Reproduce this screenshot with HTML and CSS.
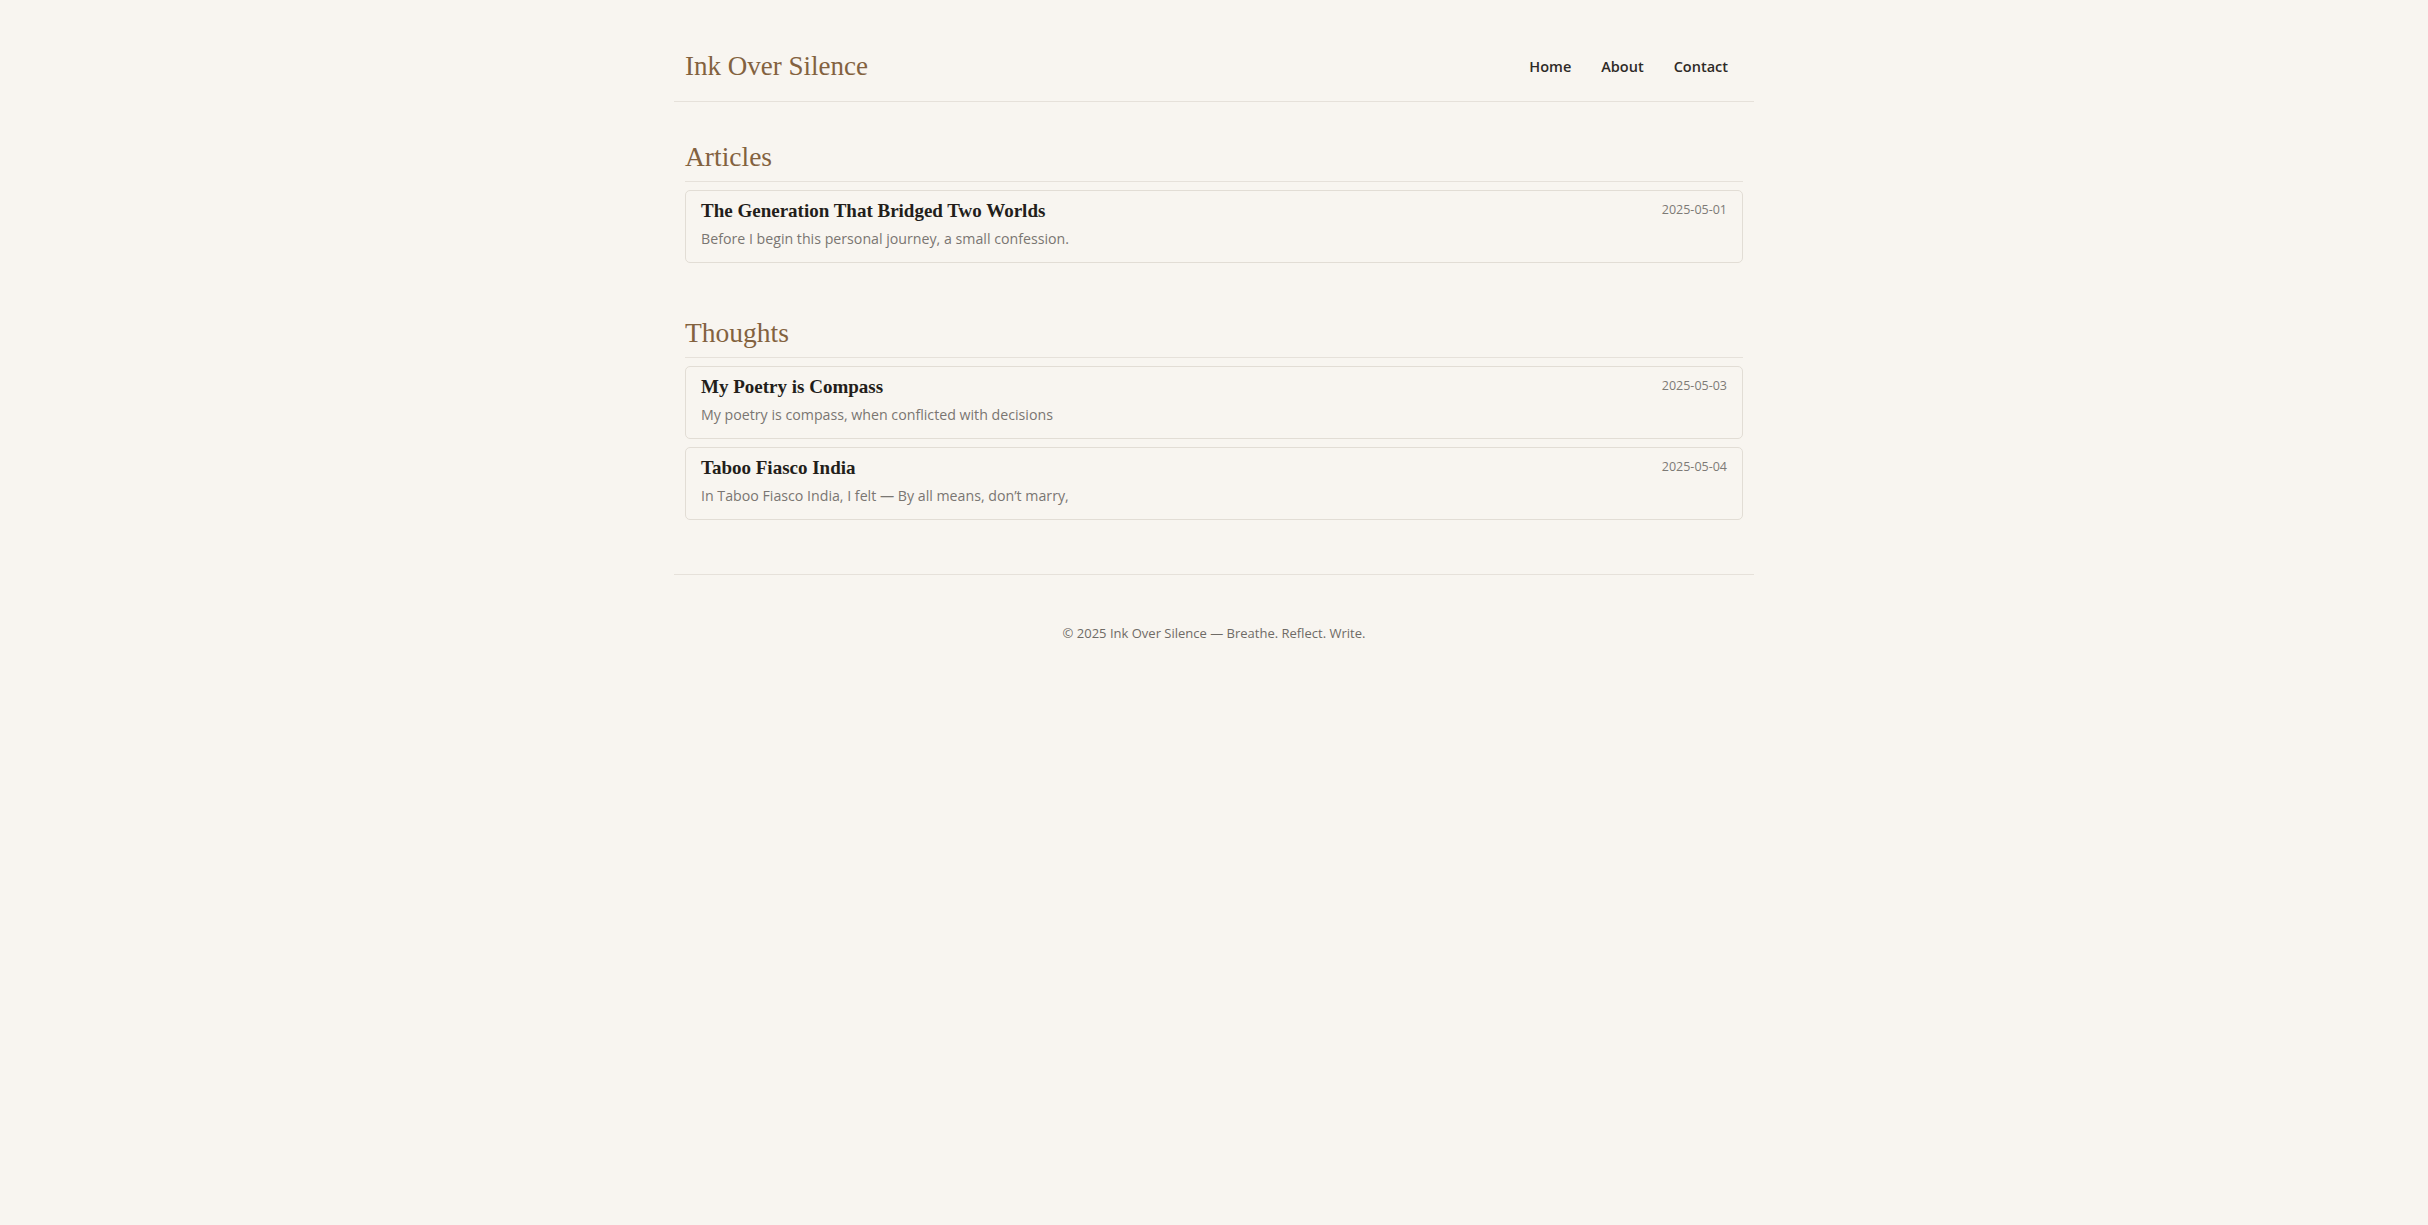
FILE: index.html
```html
<!DOCTYPE html>
<html lang="en">
<head>
<meta charset="utf-8">
<title>Ink Over Silence</title>
<link rel="stylesheet" href="styles.css">
</head>
<body>
<div class="page">
  <header class="site-header">
    <a class="site-title" href="#">Ink Over Silence</a>
    <nav class="site-nav">
      <a href="#">Home</a>
      <a href="#">About</a>
      <a href="#">Contact</a>
    </nav>
  </header>

  <main class="content">
    <section class="section">
      <h2 class="section-title">Articles</h2>
      <div class="post-list">
        <a class="post-card" href="#">
          <div class="post-head">
            <h3 class="post-title">The Generation That Bridged Two Worlds</h3>
            <span class="post-date">2025-05-01</span>
          </div>
          <p class="post-excerpt">Before I begin this personal journey, a small confession.</p>
        </a>
      </div>
    </section>

    <section class="section">
      <h2 class="section-title">Thoughts</h2>
      <div class="post-list">
        <a class="post-card" href="#">
          <div class="post-head">
            <h3 class="post-title">My Poetry is Compass</h3>
            <span class="post-date">2025-05-03</span>
          </div>
          <p class="post-excerpt">My poetry is compass, when conflicted with decisions</p>
        </a>
        <a class="post-card" href="#">
          <div class="post-head">
            <h3 class="post-title">Taboo Fiasco India</h3>
            <span class="post-date">2025-05-04</span>
          </div>
          <p class="post-excerpt">In Taboo Fiasco India, I felt — By all means, don’t marry,</p>
        </a>
      </div>
    </section>
  </main>

  <footer class="site-footer">
    <p>© 2025 Ink Over Silence — Breathe. Reflect. Write.</p>
  </footer>
</div>
</body>
</html>
```

FILE: styles.css
```css
* { box-sizing: border-box; }

html, body {
  margin: 0;
  padding: 0;
  background: #f8f5f0;
}

body {
  font-family: "Open Sans", "Noto Sans", sans-serif;
  color: #333;
}

a { text-decoration: none; color: inherit; }

.page {
  width: 1080px;
  margin: 0 auto;
}

.site-header {
  display: flex;
  align-items: center;
  justify-content: space-between;
  padding: 51px 11px 19px;
  border-bottom: 1px solid #e6e1da;
}

.site-title {
  font-family: "Liberation Serif", "Times New Roman", serif;
  font-size: 27px;
  line-height: 31px;
  color: #83623f;
}

.site-nav {
  display: flex;
}

.site-nav a {
  padding: 0 15px;
  font-size: 14.5px;
  font-weight: 600;
  color: #2e2a27;
  line-height: 31px;
}

.site-nav a:last-child { padding-right: 15px; }

.content {
  padding: 39px 11px 0;
  display: flex;
  flex-direction: column;
  gap: 54px;
}

.section-title {
  margin: 0 0 8px;
  padding-bottom: 9px;
  border-bottom: 1px solid #e6e1da;
  font-family: "Liberation Serif", "Times New Roman", serif;
  font-weight: normal;
  font-size: 27.5px;
  line-height: 31px;
  color: #83623f;
}

.post-list {
  display: flex;
  flex-direction: column;
  gap: 8px;
}

.post-card {
  display: block;
  border: 1px solid #e2ddd5;
  border-radius: 5px;
  padding: 9px 15px 13px;
  background: #f8f5f0;
}

.post-head {
  display: flex;
  justify-content: space-between;
  align-items: flex-start;
}

.post-title {
  margin: 0;
  font-family: "Liberation Serif", "Times New Roman", serif;
  font-weight: bold;
  font-size: 19px;
  line-height: 22px;
  color: #231e1a;
}

.post-date {
  font-size: 12.5px;
  line-height: 20px;
  color: #7d7a76;
}

.post-excerpt {
  margin: 6px 0 0;
  font-size: 14.2px;
  line-height: 21px;
  color: #7a7672;
}

.site-footer {
  margin-top: 54px;
  border-top: 1px solid #e6e1da;
  padding-top: 48px;
  text-align: center;
}

.site-footer p {
  margin: 0;
  font-size: 13px;
  line-height: 20px;
  color: #6f6b66;
}
```
